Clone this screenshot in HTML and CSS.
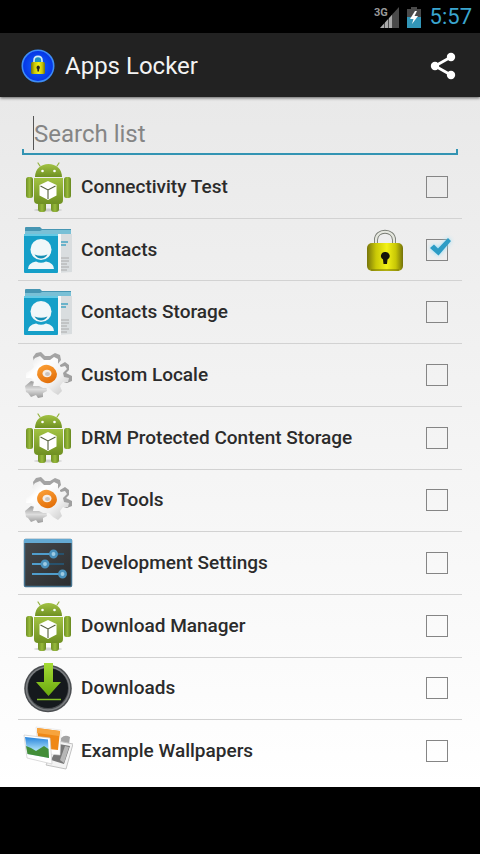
FILE: index.html
```html
<!DOCTYPE html>
<html lang="en">
<head>
<meta charset="utf-8">
<meta name="viewport" content="width=device-width, initial-scale=1">
<title>Apps Locker</title>
<link rel="stylesheet" href="styles.css">
</head>
<body>
<svg class="sprite" aria-hidden="true">
  <defs>
    <linearGradient id="g-green" x1="0" y1="0" x2="0" y2="1"><stop offset="0" stop-color="#a2c243"/><stop offset="1" stop-color="#6f9022"/></linearGradient>
    <linearGradient id="g-limb" x1="0" y1="0" x2="1" y2="0"><stop offset="0" stop-color="#6f9025"/><stop offset=".5" stop-color="#98ba3c"/><stop offset="1" stop-color="#66861f"/></linearGradient>
    <linearGradient id="g-gear" x1="0" y1="0" x2="1" y2="1"><stop offset="0" stop-color="#e2e2e2"/><stop offset=".3" stop-color="#ffffff"/><stop offset=".65" stop-color="#f0f0f0"/><stop offset="1" stop-color="#c4c4c4"/></linearGradient>
    <linearGradient id="g-tooth" x1="0" y1="0" x2="0" y2="1"><stop offset="0" stop-color="#999"/><stop offset=".5" stop-color="#ddd"/><stop offset="1" stop-color="#999"/></linearGradient>
    <linearGradient id="g-orange" x1="0" y1="0" x2="1" y2="1"><stop offset="0" stop-color="#ffa63c"/><stop offset="1" stop-color="#dd6500"/></linearGradient>
    <linearGradient id="g-panel" x1="0" y1="0" x2="1" y2="1"><stop offset="0" stop-color="#45484b"/><stop offset="1" stop-color="#2b2d2f"/></linearGradient>
    <linearGradient id="g-arrow" x1="0" y1="0" x2="0" y2="1"><stop offset="0" stop-color="#a6dc35"/><stop offset="1" stop-color="#69a80e"/></linearGradient>
    <linearGradient id="g-sky" x1="0" y1="0" x2="0" y2="1"><stop offset="0" stop-color="#2683dc"/><stop offset=".6" stop-color="#a5dcf7"/></linearGradient>
    <linearGradient id="g-lock" x1="0" y1="0" x2="1" y2="0"><stop offset="0" stop-color="#77750a"/><stop offset=".25" stop-color="#c9c806"/><stop offset=".55" stop-color="#f3f216"/><stop offset=".8" stop-color="#c8c705"/><stop offset="1" stop-color="#74720a"/></linearGradient>
    <linearGradient id="g-signal" x1="0" y1="0" x2="1" y2="0"><stop offset="0" stop-color="#aaa"/><stop offset=".68" stop-color="#aaa"/><stop offset=".7" stop-color="#4a4a4a"/><stop offset="1" stop-color="#4a4a4a"/></linearGradient>
    <radialGradient id="g-blue"><stop offset="0" stop-color="#1267ff"/><stop offset="1" stop-color="#0534e4"/></radialGradient>
  </defs>
  <symbol id="i-android" viewBox="0 0 50 50">
    <ellipse cx="25" cy="48" rx="14" ry="1.500" fill="#999" opacity=".4"/>
    <path d="M17 4 15 1M34 4 36 1" stroke="#93b23d" stroke-width="1.200" stroke-linecap="round"/>
    <rect x="15" y="36" width="8" height="14" rx="3" fill="url(#g-limb)"/>
    <rect x="28" y="36" width="8" height="14" rx="3" fill="url(#g-limb)"/>
    <rect x="3" y="15" width="7" height="21" rx="2.500" fill="url(#g-limb)"/>
    <rect x="41" y="15" width="7" height="21" rx="2.500" fill="url(#g-limb)"/>
    <path d="M12 15C12 7 18 2 25.500 2S39 7 39 15Z" fill="url(#g-green)"/>
    <circle cx="19.500" cy="9" r="1.300" fill="#fff"/><circle cx="31.500" cy="9" r="1.300" fill="#fff"/>
    <path d="M11 16H40V38Q40 42 36 42H15Q11 42 11 38Z" fill="url(#g-green)"/>
    <path d="M25 19 33.500 23V33.500L25 38 16.500 33.500V23Z" fill="#fff"/>
    <path d="M17.500 24 25 28 32.500 24M25 28V37" fill="none" stroke="#55603f" stroke-width="1.100"/>
  </symbol>
  <symbol id="i-contacts" viewBox="0 0 50 50">
    <path d="M2 3Q2 2 3 2H17L19 4H48V12H2Z" fill="#4696b3"/>
    <path d="M2 6H17L19 5H48V10H2Z" fill="#79c0d6"/>
    <path d="M35 9H49V47L35 48Z" fill="#d9dddf"/>
    <path d="M35 9H38V48H35Z" fill="#f8f8f8"/>
    <path d="M38 17H45M38 20H43" stroke="#47a5c4" stroke-width="1.500"/>
    <path d="M38 33H46M38 36H46M38 39H44M38 42H46M38 45H44" stroke="#aaa" stroke-width="1"/>
    <rect x="1" y="9" width="34" height="39" rx="1" fill="#159fc8"/>
    <path d="M1 10H35" stroke="#64c9e4" stroke-width="2"/>
    <ellipse cx="18" cy="24.500" rx="10.500" ry="10.500" fill="#f0f7f9"/>
    <path d="M11.500 29.500Q18 32 24.500 29.500Q22 33.500 18 33.500T11.500 29.500Z" fill="#128db4"/>
    <path d="M5 44Q5 38 13 36.500Q18 39 23 36.500Q31 38 31 44Z" fill="#f0f7f9"/>
  </symbol>
  <symbol id="i-gear" viewBox="0 0 50 50">
    <path d="M2 36 8 31 23 35 24 41 20 43V47L15 48 13 45 8 47 5 43 3 42Z" fill="url(#g-tooth)"/>
    <path d="M10 7 13 3 18 2 22 6 27 6 32 3 37 5 38 10 34 15 11 13Z" fill="#a4a4a4"/>
    <path d="M37 15 42 12 46 15 46 20 43 23 49 26 49 31 44 33 37 31Z" fill="#a0a0a0"/>
    <path d="M12 8 17 6 21 10H27L31 7 35 9V14L38 17 42 16 44 19 40 23 41 27 46 28 45 32 40 32 37 36 39 41 35 45 30 42 26 38 20 38 16 36 10 36 11 31 8 28 3 28 3 23 8 20 11 17 9 12Z" fill="url(#g-gear)"/>
    <ellipse cx="24" cy="24" rx="10" ry="9" transform="rotate(18 24 24)" fill="url(#g-orange)"/>
    <ellipse cx="24" cy="23.500" rx="4.500" ry="3.800" fill="#f5eee6"/>
    <ellipse cx="24.500" cy="24" rx="2.500" ry="2" fill="#c9c4c0"/>
  </symbol>
  <symbol id="i-sliders" viewBox="0 0 50 50">
    <rect x="1.500" y="1.500" width="47" height="47" rx="1" fill="url(#g-panel)" stroke="#44718d" stroke-width="1.500"/>
    <path d="M1 3H49" stroke="#64a9d2" stroke-width="4"/>
    <path d="M9 16H41M9 26H41M9 36H41" stroke="#28526d" stroke-width="2"/>
    <path d="M9 16H30M9 26H22M9 36H39" stroke="#4f9dcc" stroke-width="2"/>
    <g fill="#9fcbe2" stroke="#4a91bc" stroke-width="2.500"><circle cx="30.500" cy="16" r="3.200"/><circle cx="22" cy="26" r="3.200"/><circle cx="39.500" cy="36" r="3.200"/></g>
  </symbol>
  <symbol id="i-download" viewBox="0 0 50 50">
    <circle cx="25" cy="25.500" r="23.800" fill="#4b4e51"/>
    <circle cx="25" cy="25.500" r="21.500" fill="none" stroke="#7b7e81" stroke-width="1.500"/>
    <circle cx="25" cy="25" r="20" fill="#15191d"/>
    <path d="M21 0H30V19H38L25.500 33 13 19H21Z" fill="url(#g-arrow)"/>
    <path d="M14 36.500H38" stroke="#83be27" stroke-width="1.500"/>
  </symbol>
  <symbol id="i-photos" viewBox="0 0 50 50">
    <path d="M38 12Q42 8 47 11L46 18 38 18Z" fill="#a4a4a4"/>
    <path d="M35 15 50 18 43 43 23 39Z" fill="#f3f3f3" stroke="#c2c2c2"/>
    <path d="M36 18 47 20 41 38 28 34Z" fill="#777"/>
    <path d="M42 20 46 21 41 37 37 34Z" fill="#b7b7b7"/>
    <path d="M13 1 38 4 37 29 15 27Z" fill="#fff" stroke="#ddd" stroke-width=".6"/>
    <path d="M14 2 37 5 35 24 16 22Z" fill="#ef8816"/>
    <path d="M14 2 37 5 36 10 14 7Z" fill="#f7a43d"/>
    <path d="M1 9 27 12 29 38 4 32Z" fill="#fff" stroke="#ccc" stroke-width=".7"/>
    <path d="M2 11 25 13.500 26 32 4.500 28Z" fill="url(#g-sky)"/>
    <path d="M3 20 8 22 13 25 21 20 25.500 23 26 32 4.500 28Z" fill="#438e38"/>
  </symbol>
  <symbol id="i-lock" viewBox="0 0 38 44">
    <path d="M10 17V12C10 1 28 1 28 12V17" fill="none" stroke="#777a72" stroke-width="4"/>
    <path d="M10 17V12C10 1 28 1 28 12V17" fill="none" stroke="#e5e7df" stroke-width="2.200"/>
    <rect x="1" y="15" width="36" height="28" rx="5" fill="url(#g-lock)"/>
    <path d="M5 42H33" stroke="#77750c" stroke-width="1.500" opacity=".7"/>
    <path d="M19 24A4 4 0 0 1 21.500 31.500L21 36H17.500L17 31.500A4 4 0 0 1 19 24Z" fill="#16150a"/>
  </symbol>
</svg>

<div class="status">
  <svg class="signal" viewBox="0 0 26 24" role="img" aria-label="3G signal">
    <path d="M6 23 25 2V23Z" fill="url(#g-signal)"/>
    <path d="M10.500 15V24M14.500 12V24M18.500 9V24" stroke="#000" stroke-opacity=".55" stroke-width="1"/>
    <text class="signal-label" x="0" y="11">3G</text>
  </svg>
  <svg class="battery" viewBox="0 0 14 22" role="img" aria-label="Battery charging">
    <path d="M4 1H10V3H14V22H0V3H4Z" fill="#4a4a4a"/>
    <path d="M0 11H14V22H0Z" fill="#3296b8"/>
    <path d="M8 5 3 13H6.500L5 18 11 10H7.500L10 5Z" fill="#fff"/>
  </svg>
  <time class="clock">5:57</time>
</div>

<header class="bar">
  <svg class="logo" viewBox="0 0 34 34" aria-hidden="true">
    <circle cx="17" cy="17" r="15.700" fill="url(#g-blue)" stroke="#3e8df5" stroke-width="1.600"/>
    <path d="M13 14V11.500C13 6 21 6 21 11.500V14" fill="#1c8fc0" stroke="#d5eef5" stroke-width="1.600"/>
    <rect x="10" y="13" width="14" height="12" rx="1.500" fill="url(#g-lock)"/>
    <path d="M17.200 16.500A2 2 0 0 1 18.200 20L18 22.500H16.500L16.200 20A2 2 0 0 1 17.200 16.500Z" fill="#222"/>
  </svg>
  <h1 class="title">Apps Locker</h1>
  <button class="share" type="button" aria-label="Share">
    <svg viewBox="0 0 26 28" aria-hidden="true"><path d="M21 5 5 14 21 23" fill="none" stroke="#fff" stroke-width="2.800"/><g fill="#fff"><circle cx="21" cy="5" r="4.200"/><circle cx="5" cy="14" r="4.200"/><circle cx="21" cy="23" r="4.200"/></g></svg>
  </button>
</header>

<main class="screen">
  <div class="search">
    <span class="caret"></span>
    <input class="search-input" type="text" placeholder="Search list" aria-label="Search list">
  </div>
  <ul class="apps">
    <li class="app"><label class="row"><svg class="icon"><use href="#i-android"/></svg><span class="name">Connectivity Test</span><span class="check"><input class="box" type="checkbox"></span></label></li>
    <li class="app"><label class="row"><svg class="icon"><use href="#i-contacts"/></svg><span class="name">Contacts</span><svg class="lock"><use href="#i-lock"/></svg><span class="check"><input class="box" type="checkbox" checked><svg class="tick" viewBox="0 0 24 22"><path d="M2 12 6 8.500 10 12.500 20 2 23 5 10.500 19.500Z" fill="#2c9cc5"/></svg></span></label></li>
    <li class="app"><label class="row"><svg class="icon"><use href="#i-contacts"/></svg><span class="name">Contacts Storage</span><span class="check"><input class="box" type="checkbox"></span></label></li>
    <li class="app"><label class="row"><svg class="icon"><use href="#i-gear"/></svg><span class="name">Custom Locale</span><span class="check"><input class="box" type="checkbox"></span></label></li>
    <li class="app"><label class="row"><svg class="icon"><use href="#i-android"/></svg><span class="name">DRM Protected Content Storage</span><span class="check"><input class="box" type="checkbox"></span></label></li>
    <li class="app"><label class="row"><svg class="icon"><use href="#i-gear"/></svg><span class="name">Dev Tools</span><span class="check"><input class="box" type="checkbox"></span></label></li>
    <li class="app"><label class="row"><svg class="icon"><use href="#i-sliders"/></svg><span class="name">Development Settings</span><span class="check"><input class="box" type="checkbox"></span></label></li>
    <li class="app"><label class="row"><svg class="icon"><use href="#i-android"/></svg><span class="name">Download Manager</span><span class="check"><input class="box" type="checkbox"></span></label></li>
    <li class="app"><label class="row"><svg class="icon"><use href="#i-download"/></svg><span class="name">Downloads</span><span class="check"><input class="box" type="checkbox"></span></label></li>
    <li class="app"><label class="row"><svg class="icon"><use href="#i-photos"/></svg><span class="name">Example Wallpapers</span><span class="check"><input class="box" type="checkbox"></span></label></li>
  </ul>
</main>
<div class="navbar"></div>
</body>
</html>
```
FILE: styles.css
```css
* { box-sizing: border-box; }

body {
  margin: 0;
  min-height: 100vh;
  display: flex;
  flex-direction: column;
  background: #000;
  font-family: Roboto, "Liberation Sans", sans-serif;
}

.sprite { position: absolute; width: 0; height: 0; }

.status {
  height: 33px;
  padding: 0 8px;
  display: flex;
  align-items: center;
  justify-content: flex-end;
}

.signal { width: 26px; height: 24px; margin-right: 7px; }
.signal-label { font-size: 11px; font-weight: 700; fill: #999; }
.battery { width: 14px; height: 22px; margin-right: 9px; }
.clock { font-size: 22px; line-height: 32px; color: #3ba6cf; }

.bar {
  position: relative;
  height: 64px;
  padding: 2px 23px 0 21px;
  display: flex;
  align-items: center;
  background: #222;
  box-shadow: 0 1px 3px rgba(0, 0, 0, .6);
}

.logo { width: 34px; height: 34px; }

.title {
  flex: 1;
  margin: 0 0 0 10px;
  font-size: 24px;
  line-height: 32px;
  font-weight: 400;
  color: #f3f3f3;
}

.share {
  width: 28px;
  height: 32px;
  padding: 0;
  border: 0;
  background: none;
  display: flex;
  align-items: center;
  justify-content: center;
}

.share svg { width: 26px; height: 28px; }

.screen {
  flex: 1;
  padding: 17px 18px 4px;
  display: flex;
  flex-direction: column;
  background: linear-gradient(#e9e9e9, #fff);
}

.search {
  height: 41px;
  margin: 0 4px 1px;
  padding: 0 10px 2px;
  display: flex;
  align-items: center;
  background:
    linear-gradient(#3394b3, #3394b3) left bottom / 2px 6px no-repeat,
    linear-gradient(#3394b3, #3394b3) right bottom / 2px 6px no-repeat,
    linear-gradient(#3394b3, #3394b3) left bottom / 100% 2px no-repeat;
}

.caret { width: 1px; height: 34px; margin: 0 0 2px 1px; background: #555; }

.search-input {
  flex: 1;
  min-width: 0;
  height: 36px;
  padding: 0;
  border: 0;
  outline: 0;
  background: none;
  font: 400 24px/32px Roboto, "Liberation Sans", sans-serif;
  color: #222;
}

.search-input::placeholder { color: #858585; opacity: 1; }

.apps {
  flex: 1;
  margin: 0;
  padding: 0;
  list-style: none;
  display: flex;
  flex-direction: column;
}

.app { flex: 1; display: flex; border-bottom: 1px solid #d2d2d2; }
.app:last-child { border-bottom-color: transparent; }

.row {
  flex: 1;
  padding: 0 14px 0 5px;
  display: flex;
  align-items: center;
}

.icon { width: 50px; height: 50px; flex: none; }

.name {
  flex: 1;
  margin-left: 8px;
  font-size: 19px;
  line-height: 24px;
  font-weight: 500;
  color: #2b2b2b;
}

.lock { width: 38px; height: 44px; margin-right: 22px; }

.check { position: relative; display: flex; }

.box {
  appearance: none;
  width: 22px;
  height: 22px;
  margin: 0;
  border: 1px solid #858585;
  background: transparent;
}

.tick {
  position: absolute;
  left: 2px;
  top: -3px;
  width: 24px;
  height: 22px;
  filter: drop-shadow(0 0 2px #8edcf8);
  pointer-events: none;
}

.navbar { height: 67px; }
```
